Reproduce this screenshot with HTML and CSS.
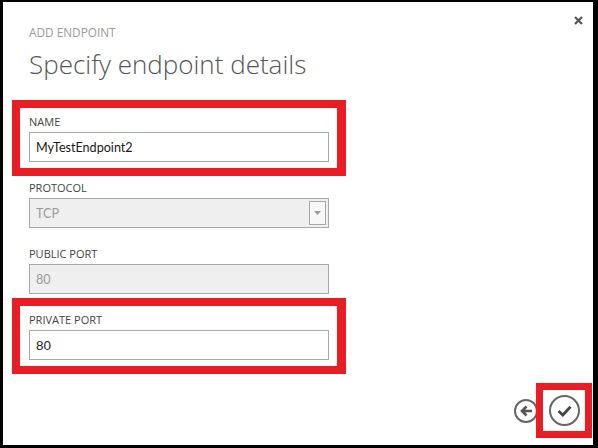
FILE: index.html
```html
<!DOCTYPE html>
<html>
<head>
<meta charset="utf-8">
<link rel="stylesheet" href="styles.css">
</head>
<body>
<div class="panel">
  <button class="close" aria-label="Close">
    <svg width="9" height="9" viewBox="0 0 9 9"><path d="M1 1 L8 8 M8 1 L1 8" stroke="#555" stroke-width="2.2" fill="none"/></svg>
  </button>
  <div class="head">
    <div class="eyebrow">ADD ENDPOINT</div>
    <h1 class="title">Specify endpoint details</h1>
  </div>
  <div class="fields">
    <div class="field hl">
      <div class="label">NAME</div>
      <div class="input">MyTestEndpoint2</div>
    </div>
    <div class="field">
      <div class="label">PROTOCOL</div>
      <div class="input disabled select">
        <span>TCP</span>
        <span class="drop"><svg width="7" height="4" viewBox="0 0 7 4"><path d="M0 0 H7 L3.5 4 Z" fill="#9a9a9a"/></svg></span>
      </div>
    </div>
    <div class="field">
      <div class="label">PUBLIC PORT</div>
      <div class="input disabled">80</div>
    </div>
    <div class="field hl">
      <div class="label">PRIVATE PORT</div>
      <div class="input arial">80</div>
    </div>
  </div>
  <div class="footer">
    <span class="circle back">
      <svg width="14" height="12" viewBox="0 0 14 12"><path d="M13 6 H3 M7.5 1.5 L3 6 L7.5 10.5" stroke="#555" stroke-width="2.6" fill="none"/></svg>
    </span>
    <span class="okbox">
      <span class="circle ok">
        <svg width="15" height="12" viewBox="0 0 15 12"><path d="M1.5 6 L5.8 10 L13.5 1.8" stroke="#444" stroke-width="2.8" fill="none"/></svg>
      </span>
    </span>
  </div>
</div>
</body>
</html>
```

FILE: styles.css
```css
html, body {
  margin: 0;
  padding: 0;
  background: #000;
  height: 448px;
  overflow: hidden;
}
.panel {
  position: relative;
  box-sizing: border-box;
  margin: 2px 5px 0 3px;
  height: 443px;
  background: #fff;
  display: flex;
  flex-direction: column;
  padding: 0 0 0 26px;
  font-family: "Open Sans", "Liberation Sans", sans-serif;
}
.close {
  position: absolute;
  top: 14px;
  right: 10px;
  border: 0;
  background: none;
  padding: 0;
  width: 9px;
  height: 9px;
  display: flex;
}
.head {
  padding-top: 23px;
}
.eyebrow {
  font-size: 11.8px;
  line-height: 14px;
  color: #999;
}
.title {
  margin: 8px 0 0 0;
  font-size: 26px;
  line-height: 34px;
  font-weight: 300;
  color: #555;
}
.fields {
  margin-top: 34px;
  width: 300px;
  display: flex;
  flex-direction: column;
  gap: 19px;
}
.field {
  display: flex;
  flex-direction: column;
  gap: 3px;
}
.field.hl {
  border: 8px solid #ea1c24;
  border-right-width: 9px;
  padding: 7px 8px 6px 9px;
  margin: -15px -17px -14px -17px;
}
.label {
  font-size: 11px;
  line-height: 14px;
  color: #444;
}
.input {
  box-sizing: border-box;
  height: 30px;
  border: 1px solid #a9a9a9;
  padding: 0 6px;
  display: flex;
  align-items: center;
  font-family: "Lato", "Open Sans", sans-serif;
  font-size: 12.6px;
  color: #1a1a1a;
  background: #fff;
}
.input.arial {
  font-family: "Liberation Sans", sans-serif;
  font-size: 13.5px;
}
.input.disabled {
  background: #efefef;
  color: #999;
}
.select {
  justify-content: space-between;
  padding-right: 2px;
}
.drop {
  box-sizing: border-box;
  width: 17px;
  height: 24px;
  border: 1px solid #a9a9a9;
  background: #f7f7f7;
  display: flex;
  align-items: center;
  justify-content: center;
}
.footer {
  margin-top: auto;
  margin-bottom: 7px;
  display: flex;
  justify-content: flex-end;
  align-items: center;
}
.circle {
  box-sizing: border-box;
  border-radius: 50%;
  border: 2px solid #666;
  display: flex;
  align-items: center;
  justify-content: center;
  background: #fff;
}
.back {
  width: 24px;
  height: 24px;
  margin-right: -2px;
}
.okbox {
  position: relative;
  border: 7px solid #ea1c24;
  width: 42px;
  height: 41px;
  display: flex;
  align-items: center;
  justify-content: center;
  margin-right: 1px;
}
.ok {
  width: 31px;
  height: 31px;
}
```
